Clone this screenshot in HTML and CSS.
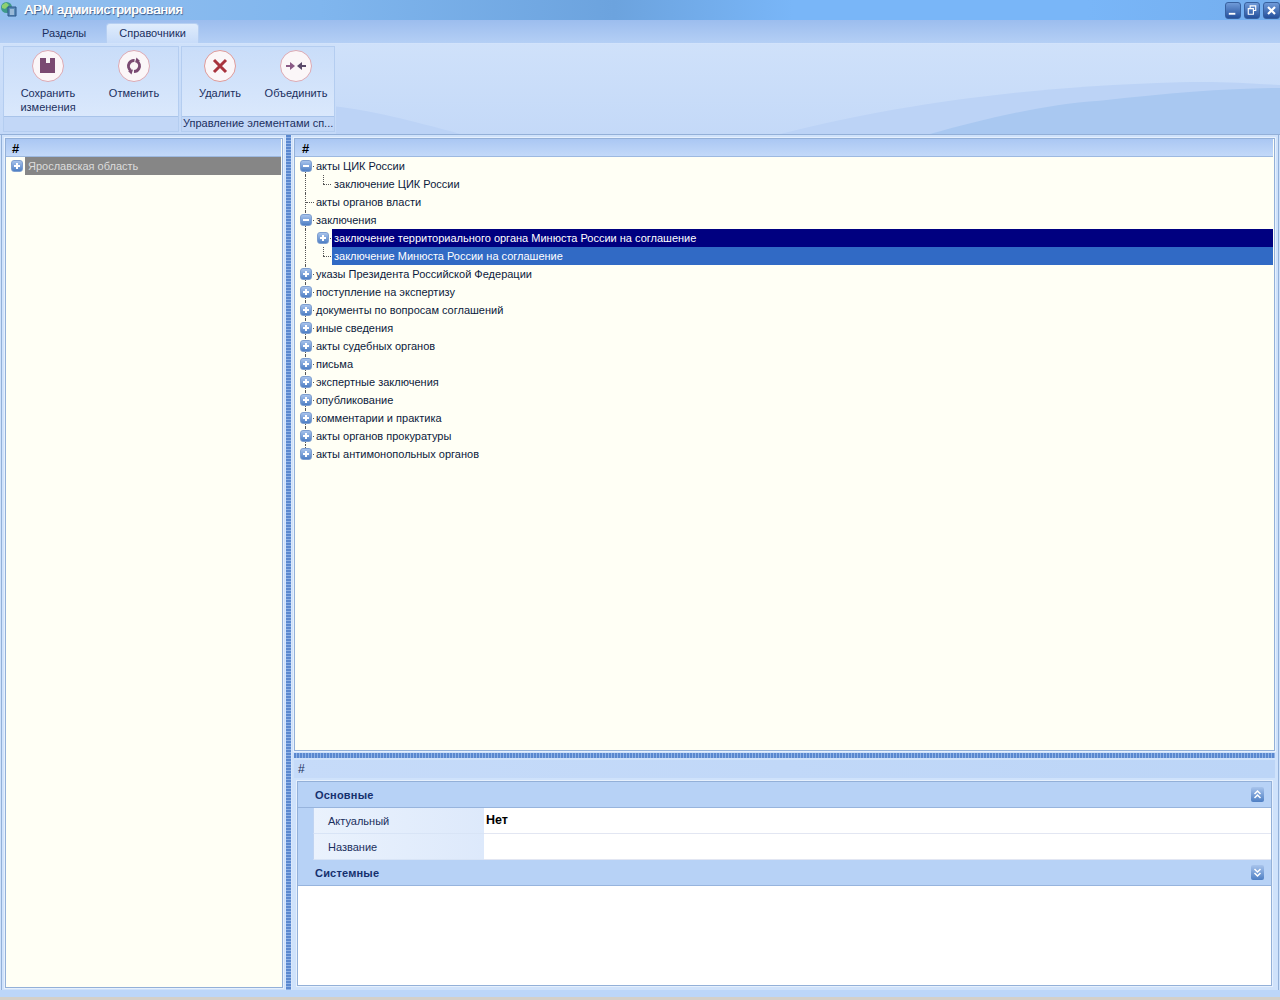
FILE: index.html
```html
<!DOCTYPE html>
<html lang="ru">

<head>
    <meta charset="UTF-8">
    <title>АРМ администрирования</title>
    <link rel="stylesheet" href="styles.css">
</head>

<body>
    <div class="window">
        <div class="titlebar">
            <svg class="app-icon" width="18" height="18" viewBox="0 0 18 18">
                <circle cx="6.5" cy="6.5" r="5.5" fill="#3f9a8a" />
                <path d="M2 4 L6 1.5 L9 4 L5 8 L2 7 Z" fill="#8fd070" />
                <path d="M8 6 h8 v9 h-8 z" fill="#5a8cb8" stroke="#2a5788" />
                <path d="M10 9 h4 M10 11 h4 M10 13 h4" stroke="#d8e8f8" />
            </svg>
            <span class="title">АРМ администрирования</span>
            <div class="win-buttons">
                <div class="win-btn">
                    <svg width="15" height="15" viewBox="0 0 15 15"><path d="M3 11 h7" stroke="#fff" stroke-width="2" /></svg>
                </div>
                <div class="win-btn">
                    <svg width="15" height="15" viewBox="0 0 15 15"><path d="M5.5 5 V2.5 h6 v5 h-2.5 M3.5 5.5 h5.5 v6 h-5.5 z" stroke="#fff" fill="none" stroke-width="1.2" /></svg>
                </div>
                <div class="win-btn">
                    <svg width="15" height="15" viewBox="0 0 15 15"><path d="M4 4 L11 11 M11 4 L4 11" stroke="#fff" stroke-width="2.2" /></svg>
                </div>
            </div>
        </div>

        <div class="tabs">
            <div class="tab">Разделы</div>
            <div class="tab active">Справочники</div>
        </div>

        <div class="ribbon">
            <svg class="ribbon-wave" viewBox="0 0 1280 92" preserveAspectRatio="none">
                <path d="M336 64 C 370 68 410 78 460 92 L336 92 Z" fill="#bcd3f6" />
                <path d="M780 92 C 860 72 980 45 1180 39 C 1220 38 1250 40 1280 42 L1280 92 Z" fill="#bcd3f6" />
                <path d="M930 92 C 980 78 1040 62 1100 58 C 1170 50 1230 45 1280 45 L1280 92 Z" fill="#a9c8f1" />
            </svg>
            <div class="group">
                <div class="group-body">
                    <div class="cmd">
                        <div class="cmd-icon">
                            <svg width="32" height="32" viewBox="0 0 32 32"><path d="M8 8 h6 v5 h4 v-5 h5 v15 h-15 z" fill="#7a4a72" /></svg>
                        </div>
                        <div class="cmd-label">Сохранить изменения</div>
                    </div>
                    <div class="cmd">
                        <div class="cmd-icon">
                            <svg width="32" height="32" viewBox="0 0 32 32"><circle cx="16" cy="16" r="5.5" fill="none" stroke="#7a4a72" stroke-width="3" stroke-dasharray="14 3.3" transform="rotate(-60 16 16)" /><path d="M18.5 7.5 l3.5 3.5 l-5 1.5 z M13.5 24.5 l-3.5 -3.5 l5 -1.5 z" fill="#7a4a72" /></svg>
                        </div>
                        <div class="cmd-label">Отменить</div>
                    </div>
                </div>
                <div class="group-footer"></div>
            </div>
            <div class="group group2">
                <div class="group-body">
                    <div class="cmd">
                        <div class="cmd-icon red">
                            <svg width="32" height="32" viewBox="0 0 32 32"><path d="M10 10 L22 22 M22 10 L10 22" stroke="#a8333d" stroke-width="3" /></svg>
                        </div>
                        <div class="cmd-label">Удалить</div>
                    </div>
                    <div class="cmd">
                        <div class="cmd-icon">
                            <svg width="32" height="32" viewBox="0 0 32 32"><path d="M6 16 h5" stroke="#8a5a86" stroke-width="2" /><path d="M21 16 h5" stroke="#5a4a6a" stroke-width="2" /><path d="M15 16 l-5 -4 v8 z" fill="#8a5a86" /><path d="M17 16 l5 -4 v8 z" fill="#5a4a6a" /></svg>
                        </div>
                        <div class="cmd-label">Объединить</div>
                    </div>
                </div>
                <div class="group-footer">Управление элементами сп...</div>
            </div>
        </div>

        <div class="main">
            <div class="left-pane">
                <div class="panel">
                    <div class="panel-head">#</div>
                    <div class="tree">
                        <div class="row grey-row">
                            <span class="exp plus"></span>
                            <span class="node">Ярославская область</span>
                        </div>
                    </div>
                </div>
            </div>

            <div class="splitter-v"></div>

            <div class="right-pane">
                <div class="panel tree-panel">
                    <div class="panel-head">#</div>
                    <div class="tree" id="tree">
                        <div class="row line"><span class="exp minus"></span><span class="node">акты ЦИК России</span></div>
                        <div class="row sub line last-sub"><span class="node">заключение ЦИК России</span></div>
                        <div class="row line leaf"><span class="node">акты органов власти</span></div>
                        <div class="row line"><span class="exp minus"></span><span class="node">заключения</span></div>
                        <div class="row sub line"><span class="exp plus"></span><span class="node sel-dark">заключение территориального органа Минюста России на соглашение</span></div>
                        <div class="row sub line last-sub"><span class="node sel-blue">заключение Минюста России на соглашение</span></div>
                        <div class="row line"><span class="exp plus"></span><span class="node">указы Президента Российской Федерации</span></div>
                        <div class="row line"><span class="exp plus"></span><span class="node">поступление на экспертизу</span></div>
                        <div class="row line"><span class="exp plus"></span><span class="node">документы по вопросам соглашений</span></div>
                        <div class="row line"><span class="exp plus"></span><span class="node">иные сведения</span></div>
                        <div class="row line"><span class="exp plus"></span><span class="node">акты судебных органов</span></div>
                        <div class="row line"><span class="exp plus"></span><span class="node">письма</span></div>
                        <div class="row line"><span class="exp plus"></span><span class="node">экспертные заключения</span></div>
                        <div class="row line"><span class="exp plus"></span><span class="node">опубликование</span></div>
                        <div class="row line"><span class="exp plus"></span><span class="node">комментарии и практика</span></div>
                        <div class="row line"><span class="exp plus"></span><span class="node">акты органов прокуратуры</span></div>
                        <div class="row line end"><span class="exp plus"></span><span class="node">акты антимонопольных органов</span></div>
                    </div>
                </div>

                <div class="splitter-h"></div>

                <div class="detail">
                    <div class="detail-head">#</div>
                    <div class="props">
                        <div class="section">
                            <span>Основные</span>
                            <div class="sec-btn">
                                <svg width="13" height="15" viewBox="0 0 13 15"><path d="M3.5 7 L6.5 4 L9.5 7 M3.5 11 L6.5 8 L9.5 11" stroke="#fff" stroke-width="1.5" fill="none" /></svg>
                            </div>
                        </div>
                        <div class="prop">
                            <div class="prop-name">Актуальный</div>
                            <div class="prop-value">Нет</div>
                        </div>
                        <div class="prop">
                            <div class="prop-name">Название</div>
                            <div class="prop-value"></div>
                        </div>
                        <div class="section">
                            <span>Системные</span>
                            <div class="sec-btn">
                                <svg width="13" height="15" viewBox="0 0 13 15"><path d="M3.5 4 L6.5 7 L9.5 4 M3.5 8 L6.5 11 L9.5 8" stroke="#fff" stroke-width="1.5" fill="none" /></svg>
                            </div>
                        </div>
                    </div>
                </div>
            </div>
        </div>

        <div class="statusbar"></div>
    </div>
</body>

</html>
```

FILE: styles.css
```css
* {
    box-sizing: border-box;
    margin: 0;
    padding: 0;
}

html, body {
    height: 100%;
    overflow: hidden;
}

body {
    font-family: "Liberation Sans", Arial, sans-serif;
    font-size: 11px;
    color: #10204a;
}

.window {
    display: flex;
    flex-direction: column;
    height: 1000px;
    background: #bcd6f8;
}

/* title bar */
.titlebar {
    display: flex;
    align-items: center;
    height: 20px;
    flex: none;
    background: linear-gradient(90deg, #93bfee 0%, #80b6ee 25%, #6ca3de 48%, #79b6f8 62%, #79b6f8 85%, #74aeee 100%);
}

.title {
    margin: -2px 0 0 6px;
    font-size: 13.4px;
    color: #fff;
    text-shadow: .4px 0 0 #fff, 1px 1px 1px #2c4a78;
}

.win-buttons {
    display: flex;
    gap: 3px;
    margin-left: auto;
}

.win-btn {
    width: 16px;
    height: 17px;
    border-radius: 3px;
    background: linear-gradient(180deg, #6f9ad8, #24509c);
    border: 1px solid #38619f;
    display: flex;
    align-items: center;
    justify-content: center;
}

.win-btn:last-child {
    width: 17px;
}

/* tabs */
.tabs {
    display: flex;
    align-items: flex-end;
    height: 23px;
    flex: none;
    padding-left: 21px;
    background: linear-gradient(180deg, #9cbdee, #b4cff5);
}

.tab {
    height: 20px;
    padding: 0 20px 0 21px;
    line-height: 20px;
    color: #1b2f5e;
}

.tab.active {
    padding: 0 12px;
    background: linear-gradient(180deg, #dfecfc, #c8dcf9);
    border: 1px solid #b6cff2;
    border-bottom: none;
    border-radius: 4px 4px 0 0;
    line-height: 19px;
}

/* ribbon */
.ribbon {
    position: relative;
    display: flex;
    gap: 2px;
    height: 92px;
    flex: none;
    padding: 2px 0 2px 3px;
    background: linear-gradient(180deg, #cfe1fa, #c4d9f8);
    border-top: 1px solid #d2e3fb;
    border-bottom: 1px solid #93b0d8;
}

.ribbon-wave {
    position: absolute;
    left: 0;
    top: 0;
    width: 100%;
    height: 100%;
}

.group {
    position: relative;
    display: flex;
    flex-direction: column;
    width: 176px;
    background: #c6daf8;
    border: 1px solid #b4cdf0;
}

.group2 {
    width: 154px;
}

.group-body {
    display: flex;
    flex: 1;
    padding-left: 1px;
    background: linear-gradient(180deg, #c9ddf9, #dae8fc);
}

.group2 .group-body {
    padding-left: 0;
}

.group-footer {
    height: 15px;
    line-height: 12px;
    padding-left: 1px;
    border-top: 1px solid #a9c4ea;
    background: #c2d7f7;
    color: #1b2f5e;
    white-space: nowrap;
}

.cmd {
    display: flex;
    flex-direction: column;
    align-items: center;
    width: 86px;
    padding-top: 3px;
}

.group2 .cmd {
    width: 76px;
}

.cmd-icon {
    width: 32px;
    height: 32px;
    border-radius: 50%;
    background: #fbf6f8;
    border: 1px solid #dba9b4;
}

.cmd-icon.red {
    border-color: #dd9a9a;
}

.cmd-icon svg {
    display: block;
    margin: -1px;
}

.cmd-label {
    margin-top: 4px;
    line-height: 14px;
    text-align: center;
    color: #1b2f5e;
    width: 70px;
}

/* main area */
.main {
    display: flex;
    flex: 1;
    min-height: 0;
    padding: 0 1px;
    background: #cfe2fb;
}

.left-pane {
    width: 284px;
    flex: none;
    padding: 3px 2px 2px 3px;
    border-left: 1px solid #93b0d8;
}

.panel {
    display: flex;
    flex-direction: column;
    height: 100%;
    border: 1px solid #93b0d8;
    outline: 1px solid #e6f0fd;
    background: #fffff5;
}

.panel-head {
    height: 18px;
    flex: none;
    margin-right: 1px;
    padding-left: 6px;
    line-height: 19px;
    font-size: 13px;
    font-weight: bold;
    color: #000;
    background: linear-gradient(180deg, #aac7f3, #c3d9f9);
    border-bottom: 1px solid #9db9e0;
}

.tree-panel .panel-head {
    padding-left: 7px;
}

.splitter-v {
    width: 7px;
    flex: none;
    background: repeating-linear-gradient(180deg, #5a88cf 0, #5a88cf 2px, #8fb2e6 2px, #8fb2e6 3px);
    border-left: 1px solid #dbe8fb;
    border-right: 1px solid #dbe8fb;
}

.right-pane {
    display: flex;
    flex-direction: column;
    flex: 1;
    min-width: 0;
    padding: 3px 3px 4px 2px;
    border-right: 1px solid #93b0d8;
}

.tree-panel {
    height: 613px;
    flex: none;
}

/* tree */
.tree {
    flex: 1;
    margin-right: 1px;
    color: #0c1a3c;
}

.row {
    position: relative;
    display: flex;
    align-items: center;
    height: 18px;
    padding-left: 5px;
}

.row .node {
    margin-left: 14px;
    padding-left: 2px;
    line-height: 18px;
    height: 18px;
}

.row .exp + .node {
    margin-left: 2px;
}

.row.sub {
    padding-left: 22px;
}

.row.sub .node {
    margin-left: 15px;
}

.row.sub .exp + .node {
    margin-left: 3px;
}

.exp {
    position: relative;
    z-index: 1;
    display: block;
    width: 12px;
    height: 12px;
    flex: none;
    border-radius: 3px;
    background: linear-gradient(180deg, #a8c4ec, #4e7fc4);
    border: 1px solid #7e9fd0;
}

.exp::before {
    content: "";
    position: absolute;
    left: 2px;
    top: 4px;
    width: 6px;
    height: 2px;
    background: #fff;
}

.exp.plus::after {
    content: "";
    position: absolute;
    left: 4px;
    top: 2px;
    width: 2px;
    height: 6px;
    background: #fff;
}

.line::before {
    content: "";
    position: absolute;
    left: 10px;
    top: 0;
    bottom: 0;
    border-left: 1px dotted #555;
}

.line:first-child::before {
    top: 9px;
}

.line::after {
    content: "";
    position: absolute;
    left: 11px;
    top: 9px;
    width: 8px;
    border-top: 1px dotted #555;
}

.line.end::before {
    bottom: 9px;
}

.row.sub::after {
    left: 28px;
    width: 8px;
}

.last-sub .node {
    position: relative;
}

.last-sub .node::before {
    content: "";
    position: absolute;
    left: -9px;
    top: 0;
    height: 9px;
    border-left: 1px dotted #555;
}

.grey-row .node,
.grey-row .exp + .node {
    flex: 1;
    padding-left: 3px;
    background: #868686;
    color: #dcdcdc;
}

.row .node.sel-dark,
.row .node.sel-blue {
    flex: 1;
    color: #fff;
}

.row .node.sel-dark {
    background: #000080;
}

.row .node.sel-blue {
    background: #316ac5;
}

/* splitter between tree and details */
.splitter-h {
    height: 5px;
    flex: none;
    margin: 2px 0;
    background: repeating-linear-gradient(90deg, #5a88cf 0, #5a88cf 2px, #8fb2e6 2px, #8fb2e6 3px);
}

.detail {
    display: flex;
    flex-direction: column;
    flex: 1;
    min-height: 0;
}

.detail-head {
    height: 18px;
    flex: none;
    padding-left: 4px;
    line-height: 19px;
    font-size: 12px;
    color: #1b2f5e;
    background: linear-gradient(90deg, #c6dbf9, #bcd5f7);
}

.props {
    flex: 1;
    margin: 3px 3px 0 3px;
    background: #fff;
    border: 1px solid #93b0d8;
    outline: 1px solid #e6f0fd;
}

.section {
    display: flex;
    align-items: center;
    justify-content: space-between;
    height: 26px;
    padding: 0 7px 0 17px;
    font-weight: bold;
    letter-spacing: .2px;
    color: #15306e;
    background: #b7d2f6;
    border-bottom: 1px solid #97b4dd;
}

.sec-btn {
    display: flex;
    width: 13px;
    height: 15px;
    border-radius: 2px;
    background: linear-gradient(180deg, #a8c4ec, #4e7fc4);
}

.prop {
    display: flex;
    height: 26px;
    background: #b7d2f6;
    padding-left: 15px;
}

.prop-name {
    width: 171px;
    flex: none;
    padding-left: 14px;
    line-height: 27px;
    color: #1b2f5e;
    background: linear-gradient(90deg, #eaf2fd, #dde9fb);
    border-bottom: 1px solid #d8e4f6;
    border-left: 1px solid #c0d4f2;
}

.prop-value {
    flex: 1;
    padding-left: 2px;
    line-height: 25px;
    font-size: 12.5px;
    font-weight: bold;
    color: #000;
    background: #fff;
    border-bottom: 1px solid #e2e6f2;
}

.statusbar {
    height: 10px;
    flex: none;
    background: linear-gradient(180deg, #bcd6f8 0, #bcd6f8 70%, #d4d0c8 70%);
}
```
